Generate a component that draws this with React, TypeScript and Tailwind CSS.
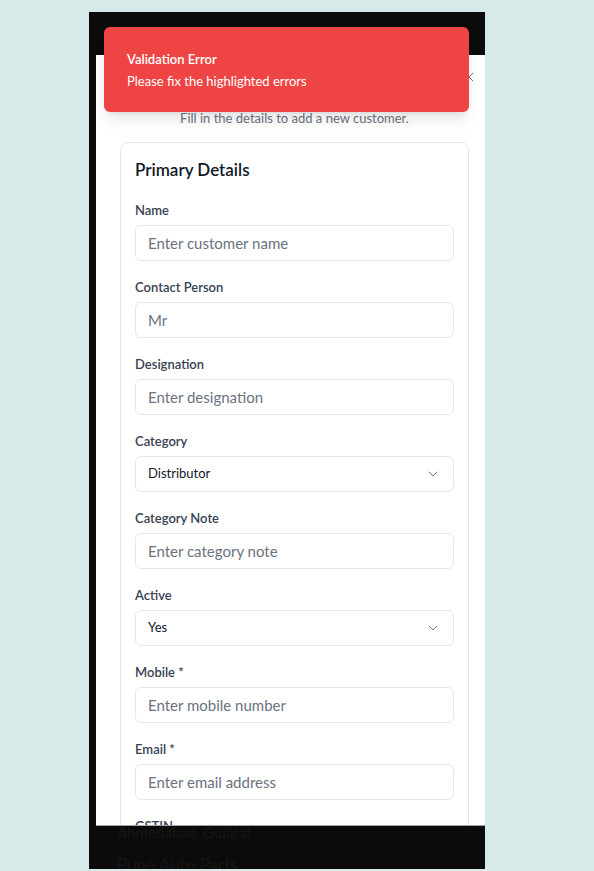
import { ChevronDown, X } from 'lucide-react'

type Field = {
  label: string
  placeholder?: string
  value?: string
  select?: boolean
}

const fields: Field[] = [
  { label: 'Name', placeholder: 'Enter customer name' },
  { label: 'Contact Person', placeholder: 'Mr' },
  { label: 'Designation', placeholder: 'Enter designation' },
  { label: 'Category', value: 'Distributor', select: true },
  { label: 'Category Note', placeholder: 'Enter category note' },
  { label: 'Active', value: 'Yes', select: true },
  { label: 'Mobile *', placeholder: 'Enter mobile number' },
  { label: 'Email *', placeholder: 'Enter email address' },
  { label: 'GSTIN', placeholder: 'Enter GSTIN' },
]

const FormField = ({ field }: { field: Field }) => {
  return (
    <div className="flex flex-col gap-[5px]">
      <label className="text-[13px] font-semibold leading-5 text-[#374151]">
        {field.label}
      </label>
      {field.select ? (
        <div className="flex h-9 items-center justify-between rounded-md border border-[#e5e7eb] bg-white px-3">
          <span className="text-[13px] text-[#111827]">{field.value}</span>
          <ChevronDown className="h-4 w-4 text-[#6b7280]" strokeWidth={1.5} />
        </div>
      ) : (
        <input
          className="h-9 rounded-md border border-[#e5e7eb] bg-white px-3 text-[15px] text-[#111827] outline-none placeholder:text-[#6b7280]"
          placeholder={field.placeholder}
        />
      )}
    </div>
  )
}

export default function App() {
  return (
    <div
      className="relative min-h-screen bg-[#d8e9e9] pl-[89px] pt-[12px]"
      style={{ fontFamily: 'Lato, "Open Sans", sans-serif' }}
    >
      <div className="relative flex h-[857px] w-[396px] flex-col overflow-hidden bg-[#0b0b0b] pl-[28px] pt-[810px]">
        <p className="text-[15px] leading-5 text-[#161616]">Ahmedabad, Gujarat</p>
        <p className="mt-[11px] text-[17px] leading-6 text-[#161616]">Pune Auto Parts</p>

        {/* dialog */}
        <div className="absolute left-[7px] right-0 top-[43px] h-[771px] overflow-hidden border-b border-[#9ca3af] bg-white">
          <button className="absolute right-[8px] top-[14px] text-[#6b7280]">
            <X className="h-4 w-4" strokeWidth={1.5} />
          </button>
          <div className="pl-7 pr-5 pt-[24px]">
            <h2 className="text-center text-lg font-semibold text-[#111827]">
              Add New Customer
            </h2>
            <p className="mt-[2px] text-center text-[13px] text-[#6b7280]">
              Fill in the details to add a new customer.
            </p>
          </div>
          <div className="ml-[24px] mr-[16px] mt-[13px] rounded-lg border border-[#e5e7eb] p-[14px] pt-[13px]">
            <h3 className="mb-4 text-[17px] font-semibold leading-7 text-[#111827]">
              Primary Details
            </h3>
            <div className="flex flex-col gap-4">
              {fields.map((f) => (
                <FormField key={f.label} field={f} />
              ))}
            </div>
          </div>
        </div>
      </div>

      {/* toast */}
      <div className="absolute left-[104px] top-[27px] flex h-[85px] w-[365px] flex-col justify-center gap-[6px] rounded-md bg-[#ef4444] pl-[23px] text-white shadow-lg">
        <p className="text-[13px] font-semibold leading-4">Validation Error</p>
        <p className="text-[13px] leading-4">Please fix the highlighted errors</p>
      </div>
    </div>
  )
}
